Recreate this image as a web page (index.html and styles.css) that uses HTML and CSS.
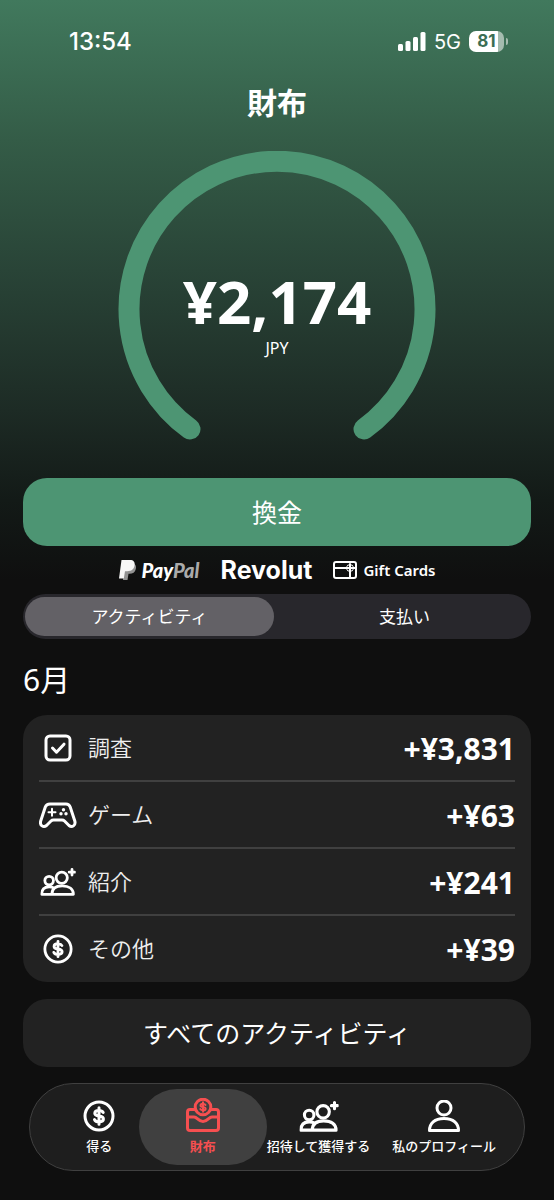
FILE: index.html
```html
<!DOCTYPE html>
<html lang="ja">
<head>
<meta charset="utf-8">
<meta name="viewport" content="width=device-width, initial-scale=1">
<title>財布</title>
<link rel="stylesheet" href="styles.css">
</head>
<body>
<svg class="sprite" aria-hidden="true">
  <symbol id="coin" viewBox="0 0 32 32">
    <circle cx="16" cy="16" r="14"/>
    <path d="M20.200 12.400c-.8-1.400-2.200-2-4.200-2-2.600 0-4.200 1.100-4.200 2.800s1.400 2.400 4.200 2.800 4.400 1.200 4.400 3-1.700 2.900-4.400 2.900c-2.200 0-3.800-.8-4.500-2.300M16 7.800v16.400"/>
  </symbol>
  <symbol id="friends" viewBox="0 0 38 30">
    <circle cx="9.500" cy="13.500" r="4.600"/>
    <circle cx="23" cy="10.500" r="6"/>
    <path d="M12.500 28.200H35.500c0-5.500-4.500-9-12-9s-11 3.500-11 9zM12.500 28.200H1.500c0-5.500 2.800-8 8-8 2 0 3.600.3 5 1.100M34 1.500v6M31 4.500h6"/>
  </symbol>
</svg>

<header class="status">
  <time class="clock">13:54</time>
  <div class="signals">
    <svg class="bars" viewBox="0 0 28 20" aria-label="電波"><rect x="0" y="12" width="5" height="7" rx="1.500"/><rect x="7.500" y="9" width="5" height="10" rx="1.500"/><rect x="15" y="5" width="5" height="14" rx="1.500"/><rect x="22.500" y="0" width="5" height="19" rx="1.500"/></svg>
    <span class="network">5G</span>
    <span class="battery"><span class="level">81</span></span>
  </div>
</header>

<main class="wallet">
  <h1 class="title">財布</h1>

  <section class="gauge" aria-label="残高">
    <svg class="ring" viewBox="0 0 318 290" aria-hidden="true"><path d="M72 278A148 148 0 1 1 246 278"/></svg>
    <div class="balance">
      <strong class="amount">¥2,174</strong>
      <span class="currency">JPY</span>
    </div>
  </section>

  <button class="button primary" type="button">換金</button>

  <div class="methods">
    <span class="paypal">
      <svg class="paypal-mark" viewBox="0 0 17 20" aria-hidden="true"><path fill="#929292" d="M6 4h9.500c1.500 1.200 1.800 3 1.300 5-.8 3.400-3 4.800-6.300 4.800H9.500L8.500 20H4z"/><path fill="#f7f7f7" d="M2.500 0H11c3.500 0 5.200 2 4.600 5.300-.7 4.200-3.300 5.900-7.200 5.900H6L4.800 18.500H0z"/></svg>
      <span class="paypal-name">Pay<span class="dim">Pal</span></span>
    </span>
    <span class="revolut">Revolut</span>
    <span class="gift">
      <svg class="gift-mark" viewBox="0 0 24 18" aria-hidden="true"><rect x="1" y="1" width="22" height="16" rx="2"/><path d="M1 7h22M17 3v14"/><path class="bow" d="M17 6.500h-2.500a1.500 1.500 0 1 1 2.500-1.500zM17 6.500h2.500a1.500 1.500 0 1 0-2.500-1.500zM17 7.500h-2.500a1.500 1.500 0 1 0 2.500 1.500zM17 7.500h2.500a1.500 1.500 0 1 1-2.500 1.500z"/></svg>
      <span>Gift Cards</span>
    </span>
  </div>

  <div class="segments" role="tablist">
    <button class="segment active" type="button" role="tab" aria-selected="true">アクティビティ</button>
    <button class="segment" type="button" role="tab" aria-selected="false">支払い</button>
  </div>

  <h2 class="month">6月</h2>

  <ul class="card">
    <li class="row">
      <svg class="icon" viewBox="0 0 38 30" aria-hidden="true"><rect x="7" y="3" width="24" height="24" rx="4"/><path d="m13.500 15 4 4.200 7.500-8"/></svg>
      <span class="label">調査</span><span class="value">+¥3,831</span>
    </li>
    <li class="row">
      <svg class="icon" viewBox="0 0 38 30" aria-hidden="true"><path d="M11 4H27C29.500 4 30.500 5.200 31.200 7L35.800 21C37 25.500 33 28 30 25.500L25.500 21C24.800 20.300 24.100 20 23 20H14.500C13.400 20 12.700 20.300 12 21L7.500 25.500C4.500 28 .5 25.500 1.700 21L6.300 7C7 5.200 8.500 4 11 4z"/><path class="pad" d="M13 8.700v7M9.500 12.200h7"/><g class="dots"><circle cx="24.500" cy="9.800" r="1.700"/><circle cx="22" cy="13.800" r="1.700"/><circle cx="27" cy="13.800" r="1.700"/></g></svg>
      <span class="label">ゲーム</span><span class="value">+¥63</span>
    </li>
    <li class="row">
      <svg class="icon people" viewBox="0 0 38 30" aria-hidden="true"><use href="#friends"/></svg>
      <span class="label">紹介</span><span class="value">+¥241</span>
    </li>
    <li class="row">
      <svg class="icon money" viewBox="0 0 32 32" aria-hidden="true"><use href="#coin"/></svg>
      <span class="label">その他</span><span class="value">+¥39</span>
    </li>
  </ul>

  <button class="button secondary" type="button">すべてのアクティビティ</button>
</main>

<nav class="tabs">
  <a class="tab" href="#earn">
    <svg class="tab-icon" viewBox="0 0 32 32" aria-hidden="true"><use href="#coin"/></svg>
    <span>得る</span>
  </a>
  <a class="tab current" href="#wallet" aria-current="page">
    <svg class="tab-icon tray" viewBox="0 0 34 34" aria-hidden="true"><path d="M8.500 11.500H4A2.500 2.500 0 0 0 1.500 14V30A2.500 2.500 0 0 0 4 32.500H30A2.500 2.500 0 0 0 32.500 30V14A2.500 2.500 0 0 0 30 11.500H25.500M1.500 19H8C11.500 19 12 23.500 17 23.500S22.500 19 26 19H32.500"/><circle cx="17" cy="9" r="7.800"/><path class="fine" d="M19.500 7c-.5-.8-1.300-1.200-2.500-1.200-1.500 0-2.500.6-2.500 1.600S15.400 8.700 17 9s2.600.7 2.600 1.700-1 1.600-2.600 1.600c-1.300 0-2.200-.4-2.700-1.300M17 4.300v9.400"/></svg>
    <span>財布</span>
  </a>
  <a class="tab" href="#invite">
    <svg class="tab-icon wide" viewBox="0 0 38 30" aria-hidden="true"><use href="#friends"/></svg>
    <span>招待して獲得する</span>
  </a>
  <a class="tab" href="#profile">
    <svg class="tab-icon" viewBox="0 0 32 32" aria-hidden="true"><circle cx="16" cy="8" r="7"/><path d="M1.500 30.500h29c0-7-5-12-14.500-12s-14.500 5-14.500 12z"/></svg>
    <span>私のプロフィール</span>
  </a>
</nav>
</body>
</html>
```

FILE: styles.css
```css
* { box-sizing: border-box; }

body {
  margin: 0;
  min-height: 100vh;
  padding-bottom: 30px;
  color: #fff;
  background: #0f0f0f linear-gradient(#41795d 0, #345c47 140px, #294437 270px, #1d2b25 410px, #131a17 500px, #0f0f0f 580px) no-repeat;
  font-family: "Noto Sans", "Noto Sans CJK JP", sans-serif;
}

button { border: 0; padding: 0; color: inherit; font: inherit; cursor: pointer; }
svg { display: block; fill: none; stroke: currentColor; stroke-width: 3; stroke-linecap: round; stroke-linejoin: round; }
.sprite { display: none; }

.status {
  display: flex;
  align-items: center;
  justify-content: space-between;
  height: 83px;
  padding: 0 50px 0 69px;
  font-family: Inter, sans-serif;
}
.clock { font-size: 24px; font-weight: 500; }
.signals { display: flex; align-items: center; gap: 8px; }
.bars { width: 28px; height: 20px; fill: #fff; stroke: none; }
.network { font-size: 20px; }
.battery {
  position: relative;
  display: flex;
  width: 35px;
  height: 21px;
  border-radius: 7px;
  background: linear-gradient(90deg, #fff 83%, #a5bcaf 83%);
}
.battery::after {
  content: "";
  position: absolute;
  top: 7px;
  right: -4px;
  width: 2px;
  height: 7px;
  border-radius: 0 2px 2px 0;
  background: #a5bcaf;
}
.level { flex: 1; text-align: center; color: #3b6e54; font-size: 17px; line-height: 21px; font-weight: 700; }

.wallet { padding: 0 23px; }
.title { margin: 0; text-align: center; font-size: 30px; line-height: 36px; font-weight: 700; font-family: "Noto Sans CJK JP", sans-serif; }

.gauge { display: grid; justify-items: center; margin-top: 32px; }
.ring { grid-area: 1 / 1; width: 318px; height: 290px; stroke: #4d9573; stroke-width: 21; }
.balance { grid-area: 1 / 1; display: flex; flex-direction: column; align-items: center; padding-top: 116px; }
.amount { font-size: 60px; line-height: 68px; font-weight: 700; }
.currency { font-size: 16px; line-height: 26px; }

.button { display: block; width: 100%; height: 68px; padding-bottom: 2px; border-radius: 24px; font-size: 25px; font-family: "Noto Sans CJK JP", sans-serif; }
.primary { margin-top: 37px; background: #4d9573; }
.secondary { margin-top: 17px; background: #222; }

.methods { display: flex; align-items: center; justify-content: center; gap: 21px; height: 48px; }
.paypal, .gift { display: flex; align-items: center; gap: 6px; }
.paypal-mark { width: 17px; height: 20px; stroke: none; }
.paypal-name { font: italic 900 20px/22px Lato, sans-serif; }
.dim { color: #aaa; }
.revolut { font: 700 25px/28px Inter, sans-serif; }
.gift { font-size: 15px; font-weight: 600; }
.gift-mark { width: 24px; height: 18px; stroke-width: 2; }
.bow { stroke-width: 1; }

.segments { display: grid; grid-template-columns: 1fr 1fr; gap: 6px; height: 45px; padding: 3px 2px; border-radius: 23px; background: #28272c; }
.segment { padding-bottom: 2px; border-radius: 20px; background: none; font-size: 17px; font-family: "Noto Sans CJK JP", sans-serif; }
.active { background: #636166; }

.month { margin: 20px 0 14px; font-size: 30px; line-height: 42px; font-weight: 400; }

.card { margin: 0; padding: 0 16px; list-style: none; border-radius: 24px; background: #222; }
.row { display: flex; align-items: center; height: 67px; border-bottom: 2px solid #404040; }
.row:last-child { border-bottom: 0; height: 66px; }
.icon { width: 38px; height: 30px; }
.money { height: 30px; }
.people { height: 28px; }
.pad { stroke-width: 2; }
.dots { fill: currentColor; stroke: none; }
.label { flex: 1; margin-left: 11px; padding-bottom: 4px; font-size: 22px; font-weight: 350; color: #eee; font-family: "Noto Sans CJK JP", sans-serif; }
.value { padding-top: 2px; font-size: 30px; line-height: 40px; font-weight: 700; }

.tabs {
  display: grid;
  grid-template-columns: 80fr 130fr 98fr 150fr;
  height: 88px;
  margin: 16px 29px 0;
  padding: 5px 6px 5px 30px;
  border: 1px solid #404040;
  border-radius: 44px;
  background: #1e1e1e;
}
.tab { display: flex; flex-direction: column; align-items: center; justify-content: flex-end; gap: 4px; padding-bottom: 9px; border-radius: 38px; color: #fff; text-decoration: none; white-space: nowrap; font-size: 13px; line-height: 20px; font-weight: 500; font-family: "Noto Sans CJK JP", sans-serif; }
.tab-icon { width: 32px; height: 32px; }
.tray { width: 34px; height: 34px; }
.wide { width: 40px; height: 31px; }
.fine { stroke-width: 2; }
.current { background: #404040; color: #f64f50; font-weight: 700; }
```
